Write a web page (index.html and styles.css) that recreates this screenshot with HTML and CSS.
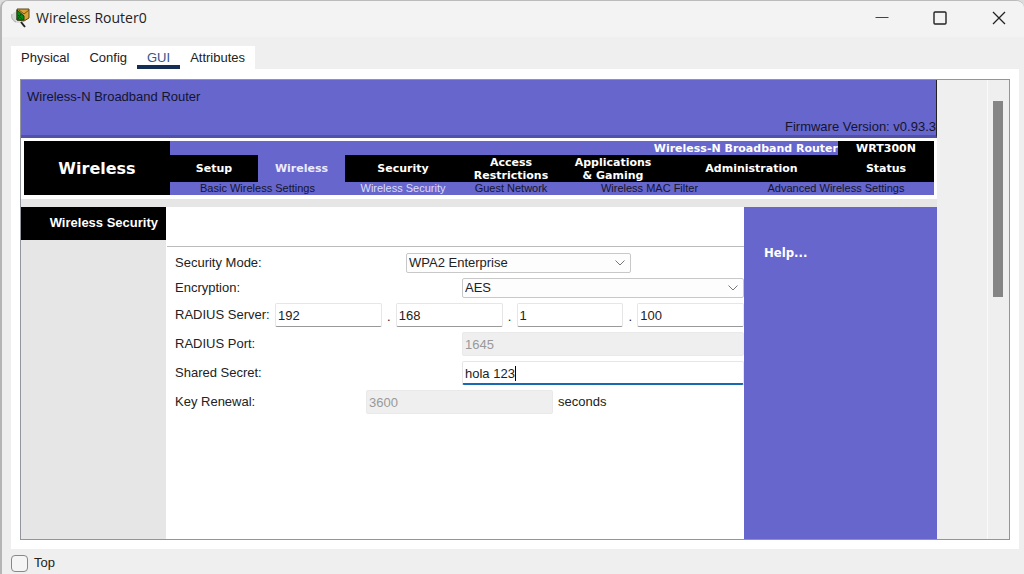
FILE: index.html
```html
<!DOCTYPE html>
<html lang="en">
<head>
<meta charset="utf-8">
<title>Wireless Router0</title>
<link rel="stylesheet" href="styles.css">
</head>
<body>
<div class="window">
  <header class="titlebar">
    <svg class="app-icon" width="20" height="20" viewBox="0 0 20 20" aria-hidden="true">
      <ellipse cx="7" cy="9" rx="6.5" ry="6" fill="#d9d9d9"/>
      <path d="M1 6C0 9 1 12 5 14" fill="none" stroke="#aaa"/>
      <path d="M6 1L18 1L18 10L13 13L6 12Z" fill="#d9a536" stroke="#5b4517"/>
      <path d="M8 2L13 6L18 2" fill="none" stroke="#705216"/>
      <path d="M6 2L13 8L13 12L6 12Z" fill="#078817" stroke="#123c16"/>
      <path d="M7 7L11 11M10 6L7 11" stroke="#034b0d"/>
      <path d="M10 14L14 19" stroke="#222" stroke-width="2"/>
    </svg>
    <h1 class="title">Wireless Router0</h1>
    <div class="window-buttons">
      <button class="window-button" aria-label="Minimize"><svg width="14" height="14" viewBox="0 0 14 14"><path d="M0.500 6.500H13.500" stroke="#444"/></svg></button>
      <button class="window-button" aria-label="Maximize"><svg width="14" height="14" viewBox="0 0 14 14"><rect x="1" y="1" width="12" height="12" rx="1" fill="none" stroke="#222" stroke-width="1.400"/></svg></button>
      <button class="window-button" aria-label="Close"><svg width="14" height="14" viewBox="0 0 14 14"><path d="M1 1L13 13M13 1L1 13" stroke="#222" stroke-width="1.300"/></svg></button>
    </div>
  </header>
  <div class="workspace">
    <div class="tabs" role="tablist">
      <button class="tab" role="tab">Physical</button>
      <button class="tab" role="tab">Config</button>
      <button class="tab tab-active" role="tab" aria-selected="true">GUI</button>
      <button class="tab" role="tab">Attributes</button>
    </div>
    <div class="panel">
      <div class="viewport">
        <div class="router">
          <div class="banner">
            <span>Wireless-N Broadband Router</span>
            <span class="firmware">Firmware Version: v0.93.3</span>
          </div>
          <div class="nav-wrap">
            <nav class="nav">
              <h2 class="section-name">Wireless</h2>
              <div class="nav-rows">
                <div class="model-row">
                  <span class="product">Wireless-N Broadband Router</span>
                  <span class="model">WRT300N</span>
                </div>
                <div class="main-menu">
                  <a href="#">Setup</a>
                  <a href="#" class="current">Wireless</a>
                  <a href="#">Security</a>
                  <a href="#">Access<br>Restrictions</a>
                  <a href="#">Applications<br>&amp; Gaming</a>
                  <a href="#">Administration</a>
                  <a href="#">Status</a>
                </div>
                <div class="sub-menu">
                  <a href="#">Basic Wireless Settings</a>
                  <a href="#" class="sub-current">Wireless Security</a>
                  <a href="#">Guest Network</a>
                  <a href="#">Wireless MAC Filter</a>
                  <a href="#">Advanced Wireless Settings</a>
                </div>
              </div>
            </nav>
          </div>
          <div class="page">
            <aside class="sidebar"><h3 class="side-title">Wireless Security</h3></aside>
            <main class="content">
              <form class="form">
                <div class="row row-mode">
                  <label for="mode">Security Mode:</label>
                  <div class="select-box">
                    <select id="mode"><option>WPA2 Enterprise</option></select>
                    <svg class="chevron" width="10" height="6" viewBox="0 0 10 6"><path d="M0.500 0.500L5 5L9.500 0.500" fill="none" stroke="#777"/></svg>
                  </div>
                </div>
                <div class="row row-wide">
                  <label for="encryption">Encryption:</label>
                  <div class="select-box">
                    <select id="encryption"><option>AES</option></select>
                    <svg class="chevron" width="10" height="6" viewBox="0 0 10 6"><path d="M0.500 0.500L5 5L9.500 0.500" fill="none" stroke="#777"/></svg>
                  </div>
                </div>
                <div class="row row-address">
                  <label for="ip1">RADIUS Server:</label>
                  <input id="ip1" type="text" value="192">
                  <span class="dot">.</span>
                  <input type="text" value="168" aria-label="RADIUS server second octet">
                  <span class="dot">.</span>
                  <input type="text" value="1" aria-label="RADIUS server third octet">
                  <span class="dot">.</span>
                  <input type="text" value="100" aria-label="RADIUS server fourth octet">
                </div>
                <div class="row row-wide">
                  <label for="port">RADIUS Port:</label>
                  <input id="port" type="text" value="1645" disabled>
                </div>
                <div class="row row-wide">
                  <label for="secret">Shared Secret:</label>
                  <div class="secret-box">
                    <input id="secret" class="editing" type="text" value="hola 123">
                    <span class="caret"></span>
                  </div>
                </div>
                <div class="row row-renewal">
                  <label for="renewal">Key Renewal:</label>
                  <input id="renewal" type="text" value="3600" disabled>
                  <span class="unit">seconds</span>
                </div>
              </form>
            </main>
            <aside class="help"><a href="#">Help...</a></aside>
          </div>
        </div>
        <div class="scrollbar"><div class="thumb"></div></div>
      </div>
    </div>
  </div>
  <footer class="footer">
    <label class="top-label"><input type="checkbox" class="check">Top</label>
  </footer>
</div>
</body>
</html>
```
FILE: styles.css
```css
* { box-sizing: border-box; }

body {
  margin: 0;
  background: #ddd;
  color: #222;
  font-family: "Liberation Sans", Arial, sans-serif;
  font-size: 13px;
  line-height: 16px;
}

h1, h2, h3 { margin: 0; }
a { color: inherit; text-decoration: none; }
button, input, select { font: inherit; color: inherit; }

.window {
  display: flex;
  flex-direction: column;
  min-height: 100vh;
  background: #efefef;
  border-top: 1px solid #bbb;
  border-left: 2px solid #b5b5b5;
  border-radius: 8px 8px 0 0;
  overflow: hidden;
}

.titlebar {
  display: flex;
  align-items: center;
  height: 36px;
  padding-left: 9px;
  background: #f3f3f3;
}

.app-icon { margin-bottom: 2px; }

.title {
  flex: 1;
  margin-left: 5px;
  padding-bottom: 2px;
  font: 400 14px/18px "Open Sans", "Noto Sans", sans-serif;
}

.window-buttons { display: flex; }

.window-button {
  display: grid;
  place-items: center;
  width: 58px;
  height: 36px;
  padding: 0 0 2px;
  border: 0;
  background: none;
}

.window-button:last-child { width: 50px; margin-left: 5px; }

.workspace {
  display: flex;
  flex: 1;
  flex-direction: column;
  padding: 9px 5px 0 9px;
}

.tabs {
  display: flex;
  align-self: flex-start;
  height: 23px;
  background: #fff;
}

.tab {
  padding: 4px 10px 0;
  border: 0;
  border-bottom: 4px solid transparent;
  background: none;
  white-space: nowrap;
}

.tab-active { border-color: #132d54; color: #34558b; }

.panel {
  display: flex;
  flex: 1;
  padding: 10px 9px 9px;
  background: #fff;
}

.viewport {
  display: flex;
  flex: 1;
  border: 1px solid #92959c;
  background: #efefef;
}

.router {
  display: flex;
  flex: 1;
  flex-direction: column;
  margin-right: 50px;
  background: #e6e6e6;
}

.banner {
  display: flex;
  flex-direction: column;
  justify-content: space-between;
  height: 58px;
  padding: 9px 0 0 6px;
  border-right: 1px solid #222;
  border-bottom: 3px solid #5151a8;
  background: #6666cc;
  color: #14142e;
}

.firmware { align-self: flex-end; }

.nav-wrap { padding: 3px 3px 4px; background: #fff; }

.nav {
  display: flex;
  background: #6666cc;
  color: #fff;
  font: 700 11px/13px "DejaVu Sans", Verdana, sans-serif;
}

.section-name {
  display: grid;
  place-items: center;
  width: 146px;
  background: #000;
  font-size: 16px;
}

.nav-rows { flex: 1; }

.model-row {
  display: grid;
  grid-template-columns: 668fr 96fr;
  height: 14px;
  line-height: 15px;
}

.product { text-align: right; }
.model { background: #000; text-align: center; }

.main-menu {
  display: grid;
  grid-template-columns: 88fr 87fr 116fr 100fr 104fr 173fr 96fr;
  height: 27px;
  text-align: center;
}

.main-menu a { display: grid; align-content: center; background: #000; }
.main-menu .current { background: #6666cc; color: #ececff; }

.sub-menu {
  display: grid;
  grid-template-columns: 175fr 116fr 100fr 177fr 196fr;
  color: #14142e;
  font: 400 11px/13px "Liberation Sans", Arial, sans-serif;
  text-align: center;
}

.sub-current { color: #dcdcff; }

.page { display: flex; flex: 1; margin-top: 8px; }

.sidebar { width: 145px; }

.side-title {
  padding: 8px 8px 9px 0;
  background: #000;
  color: #fff;
  font-size: 13px;
  line-height: 16px;
  text-align: right;
}

.content { flex: 1; padding-top: 39px; background: #fff; }

.form {
  display: grid;
  gap: 5px;
  margin-left: 1px;
  padding: 6px 0 0 8px;
  border-top: 1px solid #bbb;
}

.row { display: grid; align-items: center; }
.row-mode { grid-template-columns: 231fr 225fr 113fr; }
.row-wide { grid-template-columns: 287fr 282fr; }
.row-address { grid-template-columns: 100px 1fr 14px 1fr 14px 1fr 14px 1fr; }
.row-renewal { grid-template-columns: 191fr 187fr 191fr; }

.form label { white-space: nowrap; }

.form input {
  width: 100%;
  min-width: 0;
  height: 24px;
  padding: 1px 2px 0;
  border: 1px solid #e6e6e6;
  border-bottom: 1px solid #999;
  border-radius: 2px;
  background: #fff;
}

.form input:disabled {
  border-color: #e9e9e9;
  background: #efefef;
  color: #999;
}

.form .editing { border-bottom: 2px solid #1769b5; }

.select-box, .secret-box { position: relative; }

.select-box select {
  display: block;
  width: 100%;
  height: 20px;
  padding: 0 20px 0 2px;
  border: 1px solid #c8c8c8;
  border-radius: 2px;
  appearance: none;
  background: #fdfdfd;
}

.chevron { position: absolute; top: 7px; right: 6px; pointer-events: none; }

.secret-box input { display: block; }
.caret { position: absolute; top: 5px; left: 53px; width: 1px; height: 15px; background: #000; }

.dot { padding-top: 4px; text-align: center; }
.unit { padding-left: 5px; }

.help {
  width: 193px;
  padding: 38px 20px;
  background: #6666cc;
  color: #fff;
  font: 700 13px/16px "DejaVu Sans Condensed", Verdana, sans-serif;
}

.scrollbar {
  width: 22px;
  padding: 21px 6px 0 5px;
  border-left: 1px solid #fafafa;
}

.thumb { height: 196px; background: #858585; }

.footer { display: flex; padding: 5px 9px 2px; }

.top-label { display: flex; align-items: center; gap: 6px; height: 18px; }

.check {
  width: 17px;
  height: 17px;
  margin: 0;
  border: 1px solid #888;
  border-radius: 4px;
  appearance: none;
  background: #f5f5f5;
}
```
